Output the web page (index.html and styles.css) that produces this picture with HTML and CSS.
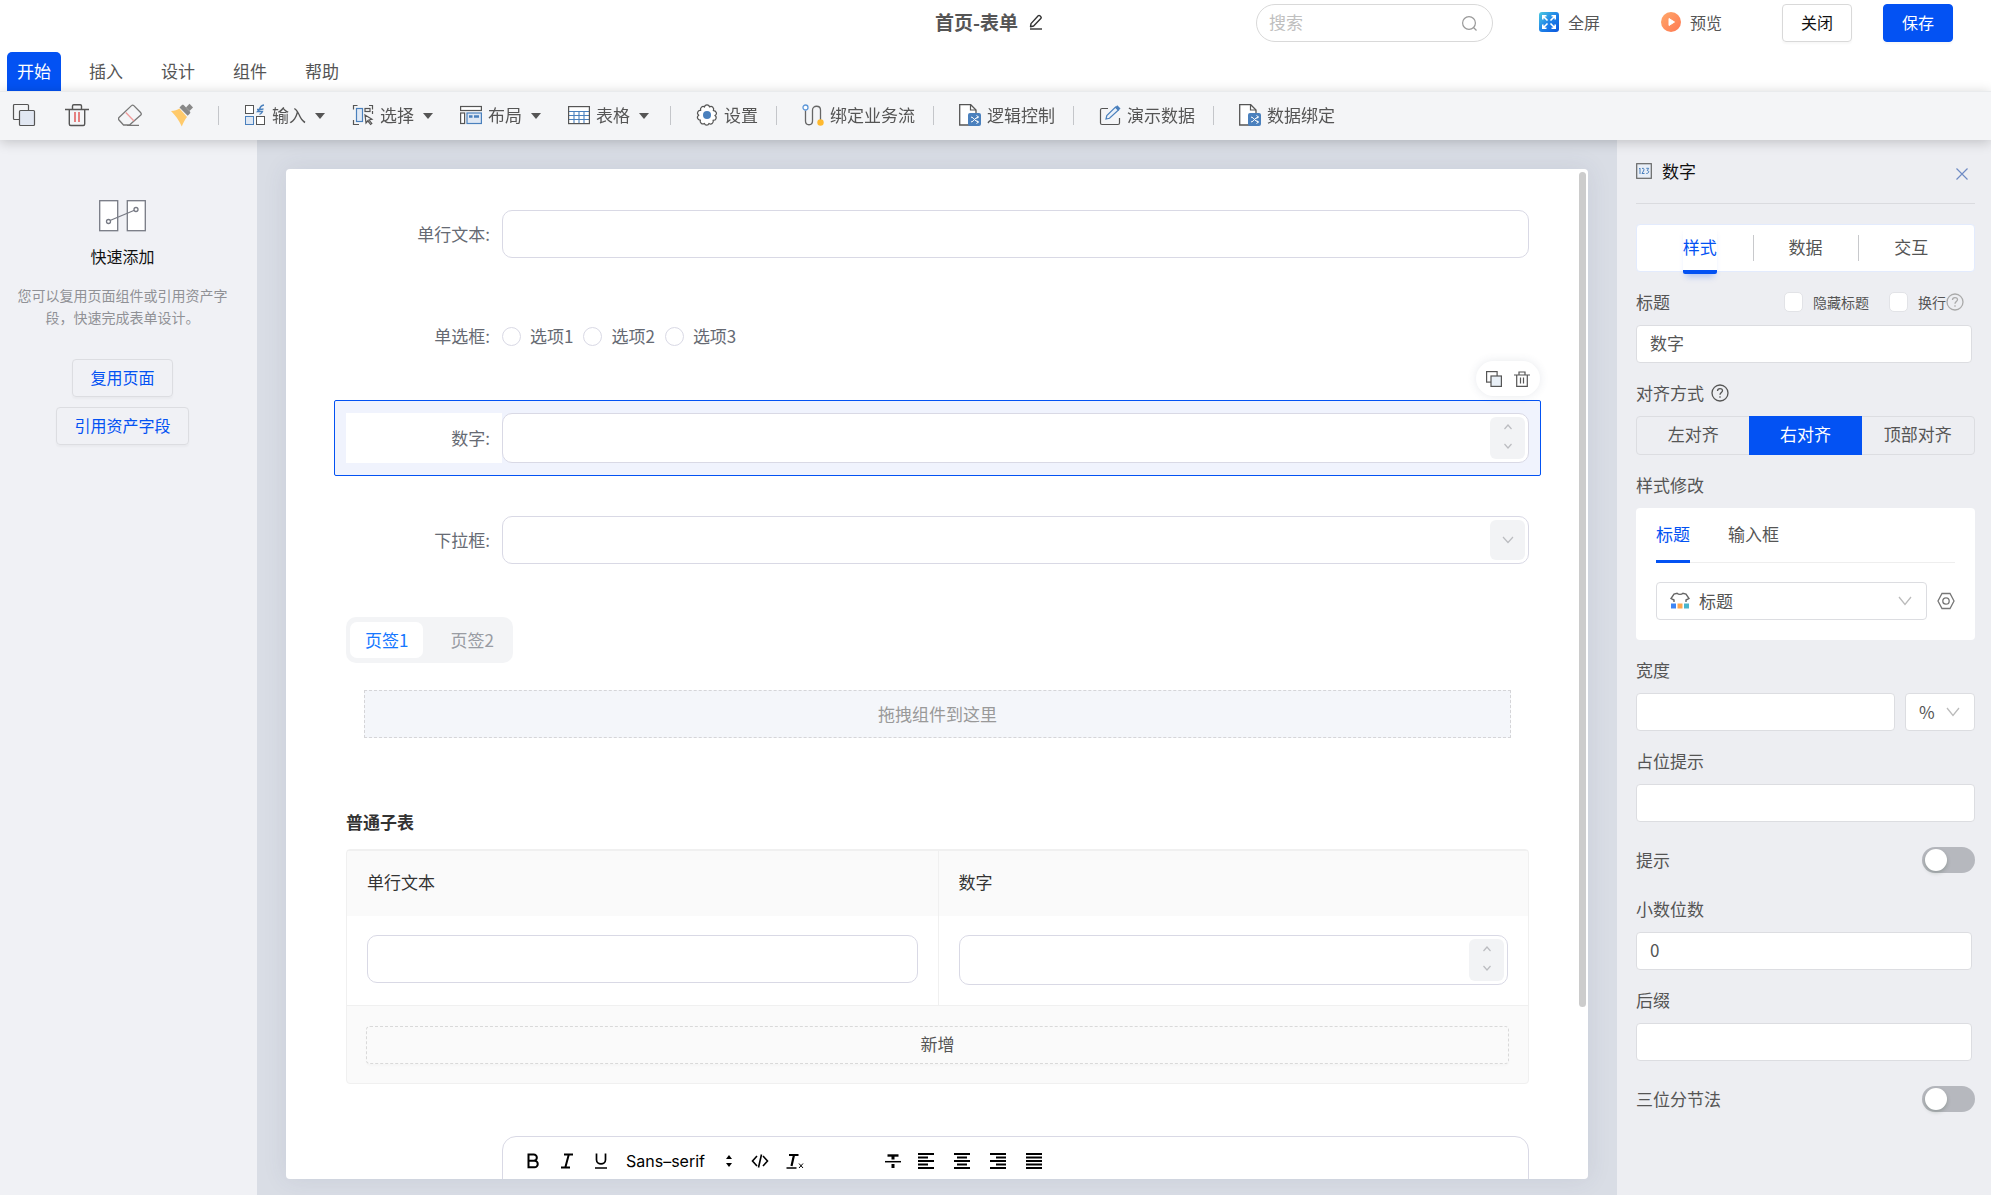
FILE: index.html
```html
<!DOCTYPE html>
<html lang="zh-CN">
<head>
<meta charset="utf-8">
<title>首页-表单</title>
<meta name="viewport" content="width=device-width, initial-scale=1">
<link rel="stylesheet" href="styles.css">
</head>
<body>
<div class="app">
  <header class="topbar">
    <div class="topbar-side"></div>
    <h1 class="doc-title">首页-表单
      <svg width="16" height="16" viewBox="0 0 16 16" fill="none" stroke="#333" stroke-width="1.4" stroke-linejoin="round"><path d="M3 9.6 10.2 1.8c.5-.5 1.200-.5 1.700 0l.9.900c.5.5.5 1.200 0 1.700L5.600 12 2.500 12.700z"/><path d="M2 15h12"/></svg>
    </h1>
    <div class="topbar-side topbar-actions">
      <label class="search">
        <input type="search" placeholder="搜索" aria-label="搜索">
        <svg width="17" height="17" viewBox="0 0 17 17" fill="none" stroke="#999" stroke-width="1.2"><circle cx="8" cy="8" r="6.400"/><path d="m12.500 12.500 3 3"/></svg>
      </label>
      <button class="link-btn fullscreen" type="button">
        <svg width="20" height="20" viewBox="0 0 20 20"><defs><linearGradient id="fs" x1="0" y1="0" x2="1" y2="1"><stop offset="0" stop-color="#4ccbe0"/><stop offset=".5" stop-color="#1f83e8"/><stop offset="1" stop-color="#0a55dc"/></linearGradient></defs><rect width="20" height="20" rx="3" fill="url(#fs)"/><g stroke="#fff" stroke-width="1.600" fill="none"><path d="M3.800 7.500V3.800h3.700M4 4l4.500 4.500M12.500 3.800h3.700v3.700M16 4l-4.500 4.500M3.800 12.500v3.700h3.700M4 16l4.500-4.500M12.500 16.200h3.700v-3.700M16 16l-4.500-4.500"/></g></svg>
        全屏
      </button>
      <button class="link-btn preview" type="button">
        <svg width="20" height="20" viewBox="0 0 20 20"><defs><linearGradient id="pv" x1="0" y1="0" x2="1" y2="1"><stop offset="0" stop-color="#ffa86a"/><stop offset="1" stop-color="#ff7852"/></linearGradient></defs><circle cx="10" cy="10" r="10" fill="url(#pv)"/><path d="M8 6.500v7l5.500-3.500z" fill="#fff" stroke="#fff" stroke-linejoin="round"/></svg>
        预览
      </button>
      <button class="btn close-btn" type="button">关闭</button>
      <button class="btn btn-primary save-btn" type="button">保存</button>
    </div>
  </header>

  <nav class="menu-tabs">
    <button class="menu-tab is-active" type="button">开始</button>
    <button class="menu-tab" type="button">插入</button>
    <button class="menu-tab" type="button">设计</button>
    <button class="menu-tab" type="button">组件</button>
    <button class="menu-tab" type="button">帮助</button>
  </nav>

  <div class="toolbar">
    <div class="tool-icons">
      <button type="button" aria-label="复制"><svg width="24" height="24" viewBox="0 0 24 24" fill="none" stroke="#555" stroke-width="1.200"><rect x="1.500" y="1.500" width="15" height="15" rx="1"/><rect x="7.500" y="7.500" width="15" height="15" rx="1" fill="#e1e7f2"/></svg></button>
      <button type="button" aria-label="删除"><svg width="24" height="24" viewBox="0 0 24 24" fill="none" stroke="#555" stroke-width="1.400"><path d="M0 6.500h24M7.500 6V3c0-.8.5-1.300 1.300-1.300h6.400c.8 0 1.300.5 1.300 1.300v3M4.300 6.500V21c0 .9.600 1.500 1.500 1.500h12.400c.9 0 1.500-.6 1.500-1.500V6.500"/><path d="M10 9v10M14 9v10" stroke="#e05a5a" stroke-width="1.500"/></svg></button>
      <button type="button" aria-label="清除"><svg width="24" height="24" viewBox="0 0 24 24" fill="none" stroke="#777" stroke-width="1.300" stroke-linejoin="round"><path d="M1 14.500 13.500 2.600c.7-.7 1.600-.7 2.300 0l7 7.200c.6.700.6 1.500 0 2.200L11.500 22h-6L1 17c-.7-.8-.7-1.700 0-2.500zM9 22.300h12"/><path d="m7.800 9.500 8.200 8.500" stroke="#ef9a9a"/></svg></button>
      <button type="button" aria-label="格式刷"><svg width="24" height="24" viewBox="0 0 24 24"><path d="M0 8c4-.2 6-1 8.500-2.500L16 14c-2 2.500-4 6-5.200 9.500C8 17 4 12 0 8z" fill="#ffca6b"/><path d="m8.500 4.500 2.200-2.200c.7-.6 1.500-.6 2.200 0l6 6.200c.6.700.6 1.400 0 2L16.700 12.700z" fill="#888"/><path d="m15 4.500 3.500-3.700L22 4.500 18.500 8z" fill="#888"/></svg></button>
    </div>
    <i class="sep"></i>
    <div class="tool-menus">
      <button class="tool" type="button"><svg width="22" height="22" viewBox="0 0 22 22" fill="none" stroke="#555"><rect x="1.500" y="1.500" width="8" height="8" fill="#fff"/><rect x="1.500" y="12.500" width="8" height="8" fill="#dfe8f4" stroke="#4a80bd"/><rect x="12.500" y="12.500" width="8" height="8" fill="#fff"/><path d="M20 1c-3 .5-4 2-4.500 4.500H13M19.500 5c-1 0-4 .5-4 .5L13.500 7.500h5c-.5 1.500-1.500 2.200-3 3" stroke="#4a80bd" stroke-width="1.300"/></svg>输入<i class="caret"></i></button>
      <button class="tool" type="button"><svg width="22" height="22" viewBox="0 0 22 22" fill="none" stroke="#555" stroke-width="1.200"><path d="M5.500 1.500h-4v4M1.500 16v4.500H7M17 1.500h3.500v4M20.500 10V7"/><rect x="4.500" y="4.500" width="6" height="13" fill="#e1eaf6" stroke="#4a80bd"/><rect x="13" y="4.500" width="5" height="3" /><path d="m13 11 7 4.200-3 .8 2.800 3.500-1.200 1-2.800-3.700-1.800 2.200z"/></svg>选择<i class="caret"></i></button>
      <button class="tool" type="button"><svg width="22" height="22" viewBox="0 0 22 22" fill="none" stroke="#555" stroke-width="1.200"><rect x=".6" y="2.500" width="20.800" height="4" fill="#fff"/><rect x=".6" y="9" width="4" height="10.500" fill="#fff"/><rect x="7" y="9" width="14.400" height="10.500" fill="#dfe8f4" stroke="#4a80bd"/><path d="M9 12.500h3.500M14 12.500h5" stroke="#4a80bd" stroke-width="2.400"/></svg>布局<i class="caret"></i></button>
      <button class="tool" type="button"><svg width="22" height="22" viewBox="0 0 22 22" fill="none"><rect x=".6" y="2.600" width="20.800" height="17" fill="#fff"/><path d="M1 7.500h20M1 11.500h20M1 15.500h20M6 7v12M11 7v12M16 7v12" stroke="#4a80bd" stroke-width="1.100"/><rect x=".6" y="2.600" width="20.800" height="17" stroke="#555" stroke-width="1.200"/></svg>表格<i class="caret"></i></button>
    </div>
    <i class="sep"></i>
    <button class="tool" type="button"><svg width="22" height="22" viewBox="0 0 22 22" fill="#fff" stroke="#555" stroke-width="1.200" stroke-linejoin="round"><path d="M8.500 3c.4-2.800 4.600-2.800 5 0 2.300-1.700 5.200 1.200 3.800 3.600 2.600-.2 4.700 3.600 1.600 4.900 2.600 1.600.8 5.200-1.800 4.700.9 2.600-2 5-4.100 3.200-.7 2.400-3.900 2.400-4.600 0-2.300 1.600-5-.8-4-3.400C1.600 16.400.2 12.700 2.800 11.200.2 9.500 2 6 4.700 6.500 3.800 4 6.500 1.300 8.500 3z"/><circle cx="11" cy="11" r="4" fill="#4a80bd" stroke="none"/></svg>设置</button>
    <i class="sep"></i>
    <button class="tool" type="button"><svg width="22" height="22" viewBox="0 0 22 22" fill="none" stroke="#666" stroke-width="1.300"><path d="M3.500 6.500V17c0 5 7 5 7 0V6c0-5 8-5 8 0v10"/><circle cx="3.500" cy="3.500" r="2.500" fill="#fff" stroke="#5d97d8"/><circle cx="18.500" cy="18.500" r="3.200" fill="#ffb92e" stroke="none"/></svg>绑定业务流</button>
    <i class="sep"></i>
    <button class="tool" type="button"><svg width="22" height="22" viewBox="0 0 22 22" fill="none"><path d="M17 21H.7V.7h11L17 6z" fill="#fff" stroke="#555" stroke-width="1.300"/><path d="M11.500.7V6H17" stroke="#555" stroke-width="1.200"/><rect x="9" y="9" width="13" height="13" rx="2" fill="#4a80bd"/><path d="M12 13c3 0 4 5 7.500 5M12 18c3 0 4-5 7.500-5M17.500 11.500l2 1.500-2 1.500M17.500 16.500l2 1.500-2 1.500" stroke="#fff"/></svg>逻辑控制</button>
    <i class="sep"></i>
    <button class="tool" type="button"><svg width="22" height="22" viewBox="0 0 22 22" fill="none" stroke="#555" stroke-width="1.200"><path d="M9 4.500H3c-.9 0-1.500.6-1.500 1.500v13c0 .9.600 1.500 1.500 1.500h16c.9 0 1.500-.6 1.500-1.500v-5"/><path d="m7 15 .8-3.500L16.500 3l3 3-9 8.300z" fill="#eaf1fa" stroke="#4a80bd"/><path d="m16 3.500 2.300-2.300 3.200 3.200L19.200 6.700z" fill="#4a80bd" stroke="none"/></svg>演示数据</button>
    <i class="sep"></i>
    <button class="tool" type="button"><svg width="22" height="22" viewBox="0 0 22 22" fill="none"><path d="M17 21H.7V.7h11L17 6z" fill="#fff" stroke="#555" stroke-width="1.300"/><path d="M11.500.7V6H17" stroke="#555" stroke-width="1.200"/><rect x="9" y="9" width="13" height="13" rx="2" fill="#4a80bd"/><path d="M12 13c3 0 4 5 7.500 5M12 18c3 0 4-5 7.500-5M17.500 11.500l2 1.500-2 1.500M17.500 16.500l2 1.500-2 1.500" stroke="#fff"/></svg>数据绑定</button>
  </div>

  <div class="workspace">
    <aside class="quick">
      <svg width="48" height="32" viewBox="0 0 48 32" fill="#fff" stroke="#777a84" stroke-width="1.300"><rect x=".7" y=".7" width="18" height="30"/><rect x="28.300" y=".7" width="18" height="30"/><path d="m11 20.500 25-10.500"/><circle cx="9.500" cy="21.500" r="2"/><circle cx="37" cy="9.500" r="2"/></svg>
      <h2>快速添加</h2>
      <p>您可以复用页面组件或引用资产字段，快速完成表单设计。</p>
      <button class="quick-btn" type="button">复用页面</button>
      <button class="quick-btn" type="button">引用资产字段</button>
    </aside>

    <main class="canvas">
      <div class="paper-frame">
        <form class="paper">
          <div class="slot row">
            <label class="row-label" for="f-text">单行文本:</label>
            <div class="field"><input id="f-text" type="text"></div>
          </div>
          <div class="slot row" role="radiogroup" aria-label="单选框">
            <span class="row-label">单选框:</span>
            <div class="radios">
              <label><input type="radio" name="opt">选项1</label>
              <label><input type="radio" name="opt">选项2</label>
              <label><input type="radio" name="opt">选项3</label>
            </div>
          </div>
          <div class="slot row is-selected">
            <label class="row-label" for="f-num">数字:</label>
            <div class="field field-num"><input id="f-num" type="number">
              <span class="field-end steps"><svg width="8" height="6" viewBox="0 0 8 6"><path d="m.5 5 3.500-4 3.500 4"/></svg><svg width="8" height="6" viewBox="0 0 8 6"><path d="m.5 1 3.500 4 3.500-4"/></svg></span>
            </div>
            <div class="float-tools">
              <button type="button" aria-label="复制"><svg width="16" height="16" viewBox="0 0 16 16" fill="none" stroke="#555" stroke-width="1.200"><rect x=".6" y=".6" width="10.500" height="10.500"/><rect x="5" y="5" width="10.400" height="10.400" fill="#e9f0f7"/></svg></button>
              <button type="button" aria-label="删除"><svg width="16" height="16" viewBox="0 0 16 16" fill="none" stroke="#555" stroke-width="1.200"><path d="M0 4h16M5 4V1h6v3M2.700 4v11.400h10.600V4M6.500 6.500v6M9.500 6.500v6"/></svg></button>
            </div>
          </div>
          <div class="slot row">
            <label class="row-label" for="f-sel">下拉框:</label>
            <div class="field"><select id="f-sel"><option></option></select>
              <span class="field-end"><svg width="12" height="8" viewBox="0 0 12 8"><path d="m1 1 5 5.500L11 1"/></svg></span>
            </div>
          </div>

          <div class="slot">
            <div class="page-tabs">
              <button class="is-active" type="button">页签1</button>
              <button type="button">页签2</button>
            </div>
            <div class="drop-zone">拖拽组件到这里</div>
          </div>

          <div class="slot subform">
            <h3>普通子表</h3>
            <div class="subtable">
              <table>
                <thead><tr><th id="c-text">单行文本</th><th id="c-num">数字</th></tr></thead>
                <tbody><tr>
                  <td><div class="field"><input type="text" aria-labelledby="c-text"></div></td>
                  <td><div class="field field-num"><input type="number" aria-labelledby="c-num">
                    <span class="field-end steps"><svg width="8" height="6" viewBox="0 0 8 6"><path d="m.5 5 3.500-4 3.500 4"/></svg><svg width="8" height="6" viewBox="0 0 8 6"><path d="m.5 1 3.500 4 3.500-4"/></svg></span>
                  </div></td>
                </tr></tbody>
              </table>
              <div class="subtable-foot"><button type="button">新增</button></div>
            </div>
          </div>

          <div class="slot editor-row">
            <div class="editor">
              <div class="editor-bar">
                <button type="button" aria-label="加粗"><svg width="18" height="18" viewBox="0 0 18 18" fill="none" stroke="#000" stroke-width="2"><path d="M4.500 2.500h5.200a3 3 0 0 1 0 6.300H4.500zM4.500 8.800h6a3.200 3.200 0 0 1 0 6.500h-6z"/></svg></button>
                <button type="button" aria-label="斜体"><svg width="18" height="18" viewBox="0 0 18 18" fill="none" stroke="#000" stroke-width="2"><path d="M6 2.500h9M3 15.500h9M10.800 2.500 7.300 15.500"/></svg></button>
                <button type="button" aria-label="下划线"><svg width="18" height="18" viewBox="0 0 18 18" fill="none" stroke="#000" stroke-width="1.700"><path d="M4.500 1.500v6.200c0 5.500 9 5.500 9 0V1.500M3 16h12"/></svg></button>
                <button class="font-pick" type="button">Sans–serif<svg width="8" height="14" viewBox="0 0 8 14"><path d="M4 1 7 5H1zM4 13 1 9h6z"/></svg></button>
                <button type="button" aria-label="代码"><svg width="18" height="18" viewBox="0 0 18 18" fill="none" stroke="#000" stroke-width="1.600"><path d="M6 4 1.500 9 6 14M12 4l4.500 5-4.500 5M10.500 2.500l-3 13"/></svg></button>
                <button class="clear-format" type="button" aria-label="清除格式"><svg width="20" height="18" viewBox="0 0 20 18" fill="none" stroke="#000"><path d="M4 3h9.500M9 3 6.500 14" stroke-width="2.200"/><path d="M1.500 16h10" stroke-width="1.500"/><path d="m14 11.500 4 4.500M18 11.500 14 16"/></svg></button>
                <button type="button" aria-label="删除线"><svg width="18" height="18" viewBox="0 0 18 18" fill="none" stroke="#000"><path d="M3.500 3.500h11" stroke-width="2.400"/><path d="M9 4v3.500M9 12v4" stroke-width="3"/><path d="M1 9.700h16" stroke-width="1.500"/></svg></button>
                <button class="align" type="button" aria-label="左对齐"><svg width="16" height="18" viewBox="0 0 16 18"><path d="M0 2h16M0 5.500h10M0 9h16M0 12.500h10M0 16h16"/></svg></button>
                <button class="align" type="button" aria-label="居中对齐"><svg width="16" height="18" viewBox="0 0 16 18"><path d="M0 2h16M3 5.500h10M0 9h16M3 12.500h10M0 16h16"/></svg></button>
                <button class="align" type="button" aria-label="右对齐"><svg width="16" height="18" viewBox="0 0 16 18"><path d="M0 2h16M6 5.500h10M0 9h16M6 12.500h10M0 16h16"/></svg></button>
                <button class="align" type="button" aria-label="两端对齐"><svg width="16" height="18" viewBox="0 0 16 18"><path d="M0 2h16M0 5.500h16M0 9h16M0 12.500h16M0 16h16"/></svg></button>
              </div>
            </div>
          </div>
        </form>
        <span class="scroll-thumb"></span>
      </div>
    </main>

    <aside class="props">
      <header class="props-head">
        <svg width="16" height="16" viewBox="0 0 16 16"><rect x=".7" y=".7" width="14.600" height="14.600" fill="#e8eef7" stroke="#666" stroke-width="1.200"/><path d="M3 6l1-1v6M6 5.500c2-1 2.500 1 1.500 2.500L6 10.500h2.500M10.300 5.300h2.400L11.300 7.500c2 0 2 3-1 3" fill="none" stroke="#4a80bd"/></svg>
        <h2>数字</h2>
        <button type="button" aria-label="关闭面板"><svg width="12" height="12" viewBox="0 0 12 12" fill="none" stroke="#6f8bc4" stroke-width="1.200"><path d="m.5.5 11 11M11.500.5l-11 11"/></svg></button>
      </header>

      <div class="props-tabs">
        <button class="is-active" type="button"><span>样式</span></button>
        <button type="button"><span>数据</span></button>
        <button type="button"><span>交互</span></button>
      </div>

      <div class="label-line">
        <label for="p-title">标题</label>
        <label class="check"><input type="checkbox">隐藏标题</label>
        <label class="check check-wrap"><input type="checkbox">换行</label>
        <svg class="help help-light" width="18" height="18" viewBox="0 0 18 18"><circle cx="9" cy="9" r="8"/><path d="M6.500 7c0-3.300 5-3.200 5-.2 0 1.700-2.500 1.900-2.500 4M9 12.300v1.500"/></svg>
      </div>
      <input class="input short" id="p-title" type="text" value="数字">

      <div class="label-line">
        <span>对齐方式</span>
        <svg class="help" width="18" height="18" viewBox="0 0 18 18"><circle cx="9" cy="9" r="8"/><path d="M6.500 7c0-3.300 5-3.200 5-.2 0 1.700-2.500 1.900-2.500 4M9 12.300v1.500"/></svg>
      </div>
      <div class="segmented">
        <button type="button">左对齐</button>
        <button class="is-active" type="button">右对齐</button>
        <button type="button">顶部对齐</button>
      </div>

      <div class="label-line"><span>样式修改</span></div>
      <section class="style-card">
        <div class="style-tabs">
          <button class="is-active" type="button">标题</button>
          <button type="button">输入框</button>
        </div>
        <div class="style-pick">
          <div class="select">
            <svg width="20" height="18" viewBox="0 0 20 18" fill="none"><path d="M4 10V8L1 6.500 4 2l3-.8c1.500 1.500 4.500 1.500 6 0L16 2l3 4.500L16 8v2" stroke="#666" stroke-width="1.400"/><path d="M1 11.500h5v5H1z" fill="#3e86f5"/><path d="M7.500 11.500h5v5h-5z" fill="#ffa64d"/><path d="M14 11.500h5v5h-5z" fill="#4ab5cc"/></svg>
            <select aria-label="标题样式"><option>标题</option></select>
            <svg class="chev" width="14" height="10" viewBox="0 0 14 10"><path d="m1 1 6 7.500L13 1"/></svg>
          </div>
          <button class="gear" type="button" aria-label="样式设置"><svg width="18" height="18" viewBox="0 0 18 18" fill="none" stroke="#777" stroke-width="1.300"><path d="M5 1.500h8L17 9l-4 7.500H5L1 9z"/><circle cx="9" cy="9" r="3.200"/></svg></button>
        </div>
      </section>

      <div class="label-line"><label for="p-width">宽度</label></div>
      <div class="width-line">
        <input class="input" id="p-width" type="text">
        <div class="select unit">
          <select aria-label="单位"><option>%</option></select>
          <svg class="chev" width="14" height="10" viewBox="0 0 14 10"><path d="m1 1 6 7.500L13 1"/></svg>
        </div>
      </div>

      <div class="label-line"><label for="p-ph">占位提示</label></div>
      <input class="input" id="p-ph" type="text">

      <label class="switch-line">提示<input type="checkbox" role="switch"></label>

      <div class="label-line after-switch"><label for="p-dec">小数位数</label></div>
      <input class="input short" id="p-dec" type="text" value="0">

      <div class="label-line"><label for="p-suf">后缀</label></div>
      <input class="input short" id="p-suf" type="text">

      <label class="switch-line">三位分节法<input type="checkbox" role="switch"></label>
    </aside>
  </div>
</div>
</body>
</html>
```

FILE: styles.css
```css
:root {
  --blue: #0352f3;
  --line: #dcdde1;
  --field-line: #d9d9e5;
  --text: #555;
}

* { box-sizing: border-box; }

body {
  margin: 0;
  font: 17px/24px "Noto Sans CJK SC", sans-serif;
  color: var(--text);
  background: #fff;
}

h1, h2, h3, p { margin: 0; font-weight: 400; }

button {
  padding: 0;
  border: 0;
  background: none;
  font: inherit;
  color: inherit;
  white-space: nowrap;
}

input, select {
  min-width: 0;
  margin: 0;
  padding: 0;
  border: 0;
  background: none;
  font: inherit;
  color: inherit;
  outline: none;
  appearance: none;
}

input[type="number"] { appearance: textfield; }

svg { display: block; flex: none; }

.app { display: flex; flex-direction: column; height: 100vh; overflow: hidden; }

/* Top bar */
.topbar { display: flex; height: 52px; padding: 4px 38px 10px 26px; }
.topbar-side { flex: 1; }
.doc-title {
  display: flex;
  align-items: center;
  gap: 10px;
  height: 36px;
  font-size: 19px;
  font-weight: 700;
}
.topbar-actions { display: flex; justify-content: flex-end; align-items: center; }
.search {
  display: flex;
  align-items: center;
  width: 237px;
  height: 38px;
  padding: 0 14px 0 12px;
  border: 1px solid #d9d9d9;
  border-radius: 19px;
}
.search input { flex: 1; padding-bottom: 2px; }
.search input::placeholder { color: #bfbfbf; opacity: 1; }
.link-btn { display: flex; align-items: center; gap: 9px; padding-bottom: 2px; font-size: 16px; }
.fullscreen { margin-left: 46px; }
.preview { margin-left: 61px; }
.btn {
  width: 70px;
  height: 38px;
  padding-bottom: 2px;
  border: 1px solid #d9d9d9;
  border-radius: 4px;
  color: #111;
  font-size: 16px;
  box-shadow: 0 2px 2px rgba(0, 0, 0, .03);
}
.btn-primary { border-color: var(--blue); background: var(--blue); color: #fff; }
.close-btn { margin-left: 60px; }
.save-btn { margin-left: 31px; }

/* Menu tabs */
.menu-tabs {
  display: flex;
  gap: 18px;
  height: 39px;
  padding-left: 7px;
}
.menu-tab { padding: 0 10px 2px; border-radius: 5px 5px 0 0; }
.menu-tab.is-active { background: var(--blue); color: #fff; }

/* Toolbar */
.toolbar {
  display: flex;
  align-items: center;
  height: 49px;
  padding: 0 12px 2px;
  background: #f4f5f7;
  border-top: 1px solid #e9ebed;
  position: relative;
  z-index: 2;
  box-shadow: 0 2px 12px rgba(0, 0, 0, .2);
}
.tool-icons { display: flex; gap: 29px; margin-right: 5px; }
.tool-menus { display: flex; gap: 24px; }
.tool { display: flex; align-items: center; gap: 6px; }
.sep { width: 1px; height: 19px; margin: 0 25px 0 18px; background: #c4c6ca; }
.caret {
  width: 10px;
  margin: 2px 3px 0;
  border: 5px solid transparent;
  border-top: 6px solid #555;
  border-bottom: 0;
}

/* Workspace */
.workspace { display: flex; flex: 1; min-height: 0; }

.quick {
  display: flex;
  flex-direction: column;
  align-items: center;
  width: 257px;
  padding: 60px 26px 0 14px;
  background: #f0f1f5;
  font-size: 16px;
}
.quick h2 { margin-top: 12px; font-size: 16px; color: #111; }
.quick p {
  margin: 16px 0 31px;
  font-size: 14px;
  line-height: 22px;
  color: #909196;
  text-align: center;
}
.quick-btn {
  height: 38px;
  margin-bottom: 10px;
  padding: 0 17px 2px;
  border: 1px solid var(--line);
  border-radius: 4px;
  color: var(--blue);
  box-shadow: 0 2px 2px rgba(0, 0, 0, .03);
}

.canvas { flex: 1; min-width: 0; padding: 29px 29px 16px; background: #d9dde5; }
.paper-frame { position: relative; height: 100%; }
.paper {
  display: flex;
  flex-direction: column;
  gap: 26px;
  height: 100%;
  padding: 27px 47px 0 48px;
  border-radius: 4px;
  background: #fff;
  overflow-y: auto;
  scrollbar-width: none;
  box-shadow: 0 0 24px rgba(60, 70, 110, .1);
}
.scroll-thumb {
  position: absolute;
  top: 3px;
  right: 2px;
  bottom: 17%;
  width: 7px;
  border-radius: 4px;
  background: #ccc;
}

.slot { flex: none; padding: 12px 11px; border: 1px solid transparent; border-radius: 2px; }
.row { display: flex; align-items: center; height: 76px; color: #666a73; }
.row-label {
  flex: none;
  width: 156px;
  padding-right: 12px;
  text-align: right;
}
.is-selected { position: relative; border-color: var(--blue); background: #f0f3fd; }
.is-selected .row-label { background: #fff; line-height: 50px; }

.field {
  display: flex;
  flex: 1;
  height: 48px;
  padding: 3px;
  border: 1px solid var(--field-line);
  border-radius: 10px;
  background: #fff;
}
.field-num { height: 50px; }
.field input, .field select { flex: 1; padding: 0 12px; }
.field-end {
  display: flex;
  flex-direction: column;
  align-items: center;
  justify-content: center;
  width: 35px;
  border-radius: 6px;
  background: #f2f3f5;
}
.steps { justify-content: space-around; padding-bottom: 3px; }
.field-end path { fill: none; stroke: #bbbcc0; stroke-width: 1.2; }

.radios { display: flex; gap: 10px; }
.radios label { display: flex; align-items: center; gap: 9px; }
.radios input { width: 19px; height: 19px; border: 1px solid var(--field-line); border-radius: 50%; }

.float-tools {
  position: absolute;
  right: 0;
  bottom: calc(100% + 5px);
  display: flex;
  align-items: center;
  gap: 12px;
  height: 35px;
  padding: 0 10px;
  border-radius: 18px;
  background: #fff;
  box-shadow: 0 0 10px rgba(60, 70, 110, .12);
}

.page-tabs {
  display: flex;
  gap: 12px;
  width: max-content;
  height: 46px;
  padding: 5px 4px;
  border-radius: 10px;
  background: #f3f4f6;
  color: #999ca3;
}
.page-tabs button { padding: 0 15px; border-radius: 7px; }
.page-tabs .is-active { background: #fff; color: #1677ff; }
.drop-zone {
  height: 48px;
  margin: 27px 18px 0;
  border: 1px dashed #d5d5d8;
  background: #f4f6fa;
  color: #999;
  line-height: 46px;
  text-align: center;
}

.subform h3 { margin: 20px 0 15px; font-size: 17px; font-weight: 700; color: #333; }
.subtable { border: 1px solid #f0f0f0; border-radius: 4px; background: #fafafa; }
table { width: 100%; border-collapse: separate; border-spacing: 0; table-layout: fixed; }
th, td { padding: 0 20px; border-bottom: 1px solid #f0f0f0; }
th {
  height: 66px;
  padding-bottom: 4px;
  border-top: 1px solid #f0f0f0;
  border-bottom: 0;
  font-weight: 400;
  text-align: left;
  color: #333;
}
th + th, td + td { border-left: 1px solid #f0f0f0; }
td { height: 90px; padding: 19px 20px; background: #fff; vertical-align: top; }
.subtable-foot { padding: 20px 19px 19px; }
.subtable-foot button {
  display: block;
  width: 100%;
  height: 38px;
  padding-bottom: 3px;
  border: 1px dashed #d9d9d9;
  border-radius: 4px;
  box-shadow: 0 2px 2px rgba(0, 0, 0, .02);
}

.editor-row { padding-left: 167px; }
.editor { height: 200px; border: 1px solid var(--field-line); border-radius: 14px; }
.editor-bar { display: flex; align-items: center; height: 48px; padding-left: 21px; color: #000; }
.editor-bar button { margin-right: 16px; }
.editor-bar .align { margin-right: 20px; }
.editor-bar .align path { stroke: #000; stroke-width: 2; }
.editor-bar .font-pick { display: flex; align-items: center; gap: 20px; margin-right: 18px; font: 16px/24px Inter, sans-serif; }
.editor-bar .clear-format { margin-right: 79px; }

/* Properties panel */
.props { width: 374px; padding: 19px 16px 0 19px; background: #edeef2; }
.props-head {
  display: flex;
  align-items: center;
  gap: 10px;
  height: 45px;
  padding: 0 7px 20px 0;
  border-bottom: 1px solid #dadbdf;
}
.props-head h2 { flex: 1; font-size: 17px; color: #111; }
.props-head button { margin-top: 5px; }

.props-tabs {
  display: flex;
  height: 48px;
  margin-top: 20px;
  padding: 0 10px;
  border: 1px solid #e3ebfd;
  border-radius: 4px;
  background: #fff;
}
.props-tabs button {
  flex: 1;
  background: linear-gradient(#c8c9cc, #c8c9cc) left / 1px 26px no-repeat;
}
.props-tabs button:first-child { background: none; }
.props-tabs span { display: inline-block; height: 49px; line-height: 43px; }
.props-tabs .is-active span {
  border-bottom: 4px solid var(--blue);
  border-radius: 2px;
  color: var(--blue);
  box-shadow: 0 6px 6px -3px rgba(3, 82, 243, .25);
}

.label-line { display: flex; align-items: center; gap: 7px; height: 24px; margin: 18px 0 11px; }
.check { display: flex; align-items: center; gap: 10px; font-size: 14px; margin-left: auto; }
.check input {
  width: 19px;
  height: 20px;
  border: 1px solid #e2e3e7;
  border-radius: 5px;
  background: #fff;
}
.check-wrap { margin-left: 13px; }
.help { fill: none; stroke: #555; stroke-width: 1.3; }
.help-light { margin: 0 11px 0 -7px; stroke: #aaa; }

.input, .select {
  display: block;
  width: 100%;
  height: 38px;
  padding: 0 13px 3px;
  border: 1px solid var(--line);
  border-radius: 4px;
  background: #fff;
}
.input.short { width: calc(100% - 3px); }
.select { display: flex; align-items: center; gap: 9px; padding: 0 14px 0 13px; }
.select select { flex: 1; padding-bottom: 1px; }
.chev { fill: none; stroke: #bbb; stroke-width: 1.3; }

.segmented { display: flex; height: 39px; border: 1px solid var(--line); border-radius: 4px; }
.segmented button { flex: 1; padding-bottom: 3px; }
.segmented .is-active { margin: -1px 0; background: var(--blue); color: #fff; }

.style-card { padding: 9px 20px 20px; border-radius: 4px; background: #fff; }
.style-tabs { display: flex; gap: 38px; height: 46px; border-bottom: 1px solid #eee; }
.style-tabs button { height: 46px; padding-bottom: 12px; }
.style-tabs .is-active { padding-bottom: 9px; border-bottom: 3px solid var(--blue); color: var(--blue); }
.style-pick { display: flex; align-items: center; gap: 10px; margin-top: 19px; }
.style-pick .select { flex: 1; }

.width-line { display: flex; gap: 10px; }
.width-line .input { flex: 1; }
.width-line .unit { width: 70px; }

.switch-line { display: flex; align-items: center; justify-content: space-between; height: 26px; margin-top: 25px; }
.switch-line input { width: 53px; height: 26px; padding: 2px 3px; border-radius: 13px; background: #b6b8be; }
.switch-line input::before {
  content: "";
  display: block;
  width: 22px;
  height: 22px;
  border-radius: 50%;
  background: #fff;
  box-shadow: 0 2px 4px rgba(0, 35, 11, .2);
}
.after-switch { margin-top: 24px; }
```
